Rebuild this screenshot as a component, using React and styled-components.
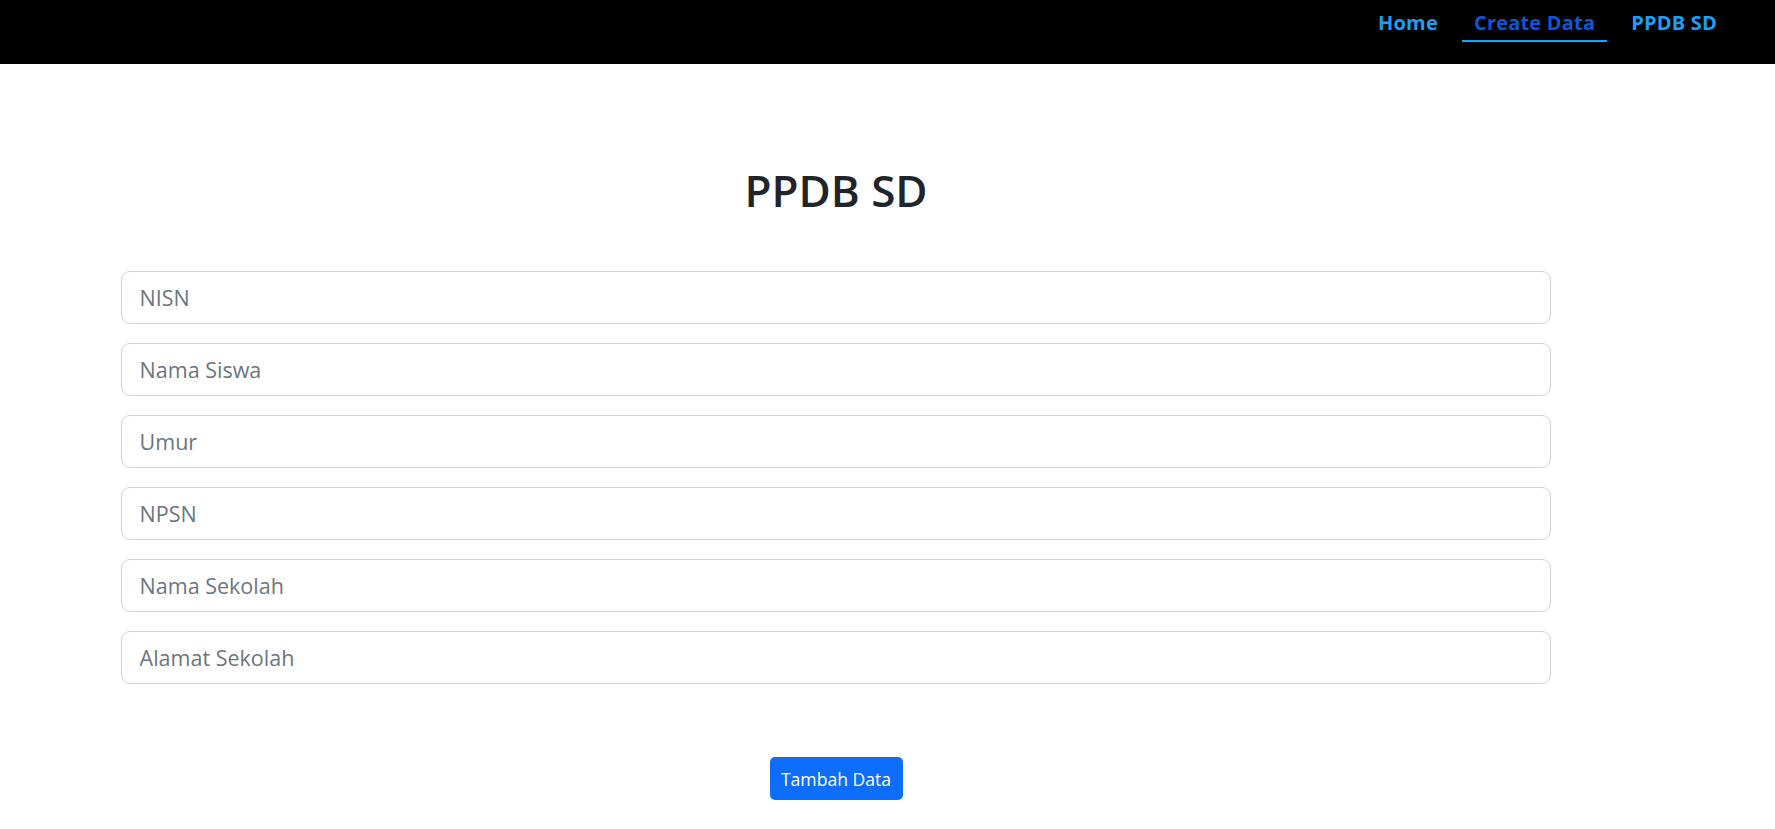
import React, { useState } from "react"
import styled, { createGlobalStyle } from "styled-components"

const GlobalStyle = createGlobalStyle`
  body {
    margin: 0;
    background: #fff;
    font-family: "Open Sans", "Noto Sans", sans-serif;
    color: #212529;
  }
`

const fields = [
  { name: "nisn", label: "NISN" },
  { name: "nama", label: "Nama Siswa" },
  { name: "umur", label: "Umur" },
  { name: "npsn", label: "NPSN" },
  { name: "sekolah", label: "Nama Sekolah" },
  { name: "alamat", label: "Alamat Sekolah" },
]

const links = ["Home", "Create Data", "PPDB SD"]

const App = () => {
  const [form, setForm] = useState({})

  return (
    <>
      <GlobalStyle />
      <Navbar>
        <NavList>
          {links.map(link => (
            <NavLink key={link} href="#" active={link === "Create Data"}>
              {link}
            </NavLink>
          ))}
        </NavList>
      </Navbar>
      <Container>
        <Title>PPDB SD</Title>
        <Form onSubmit={e => e.preventDefault()}>
          {fields.map(f => (
            <Input
              key={f.name}
              placeholder={f.label}
              value={form[f.name] || ""}
              onChange={e => setForm({ ...form, [f.name]: e.target.value })}
            />
          ))}
          <ButtonRow>
            <Button type="submit">Tambah Data</Button>
          </ButtonRow>
        </Form>
      </Container>
    </>
  )
}

export default App

const Navbar = styled.nav`
  height: 64px;
  background: #000;
  display: flex;
  justify-content: flex-end;
  align-items: flex-start;
  padding-right: 46px;
`

const NavList = styled.div`
  display: flex;
  gap: 12px;
  padding-top: 9px;
`

const NavLink = styled.a.withConfig({ shouldForwardProp: p => p !== "active" })`
  display: block;
  padding: 0 12px 3px;
  font-size: 20px;
  font-weight: 700;
  line-height: 28px;
  letter-spacing: 0.2px;
  text-decoration: none;
  color: ${props => props.active ? "#0d57d6" : "#1e9ff2"};
  border-bottom: 2px solid ${props => props.active ? "#1e9ff2" : "transparent"};
`

const Container = styled.main`
  width: 1430px;
  margin: 0 224px 0 121px;
  padding-top: 100px;
`

const Title = styled.h1`
  margin: 0 0 54px;
  text-align: center;
  font-size: 44px;
  font-weight: 600;
  line-height: 53px;
`

const Form = styled.form`
  display: flex;
  flex-direction: column;
  gap: 19px;
`

const Input = styled.input`
  box-sizing: border-box;
  height: 53px;
  width: 100%;
  padding: 0 17.6px;
  font-family: inherit;
  font-size: 21.5px;
  color: #212529;
  border: 1px solid #ced4da;
  border-radius: 9px;
  outline: 0;
  &::placeholder {
    color: #6c757d;
  }
`

const ButtonRow = styled.div`
  display: flex;
  justify-content: center;
  padding-top: 54px;
`

const Button = styled.button`
  height: 43px;
  width: 133px;
  padding: 0;
  font-family: inherit;
  font-size: 17.6px;
  color: #fff;
  background: #0d6efd;
  border: 0;
  border-radius: 5px;
  cursor: pointer;
`
